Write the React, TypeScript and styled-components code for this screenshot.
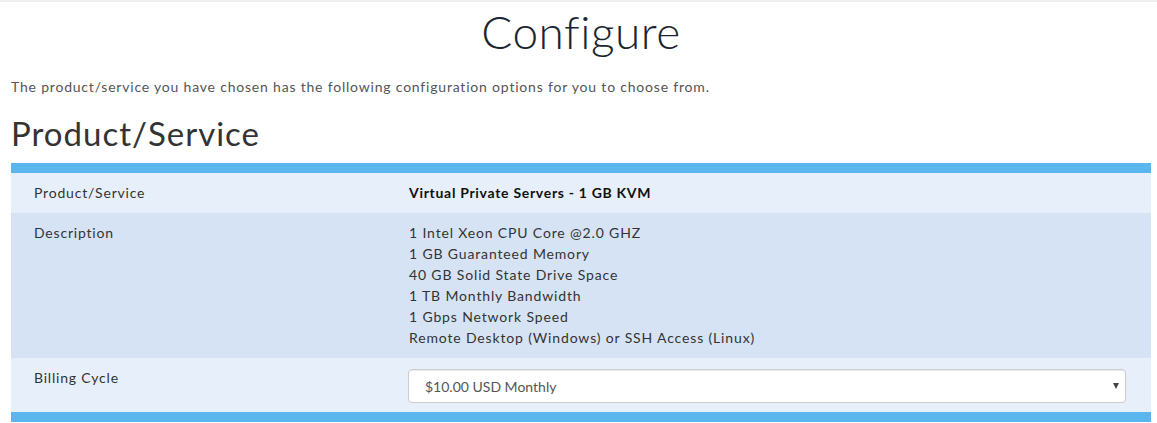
import React from "react";
import styled, { createGlobalStyle } from "styled-components";

const Global = createGlobalStyle`
  html, body { margin: 0; padding: 0; background: #fff; }
  body { font-family: "Lato", "Open Sans", sans-serif; color: #333; }
  * { box-sizing: border-box; }
`;

const TopLine = styled.div`
  height: 2px;
  background: #eeeeee;
`;

const Page = styled.main`
  padding: 0 6px 0 11px;
`;

const Title = styled.h1`
  margin: 0;
  height: 62px;
  line-height: 60px;
  text-align: center;
  font-size: 46px;
  font-weight: 300;
  color: #1a2530;
  letter-spacing: 0.5px;
`;

const Intro = styled.p`
  margin: 13px 0 0;
  line-height: 20px;
  font-size: 14px;
  color: #555;
  letter-spacing: 0.8px;
`;

const Section = styled.h2`
  margin: 16px 0 0;
  line-height: 40px;
  font-size: 33px;
  font-weight: 400;
  color: #333;
  letter-spacing: 1px;
`;

const Table = styled.div`
  margin-top: 10px;
  width: 1140px;
  border-top: 10px solid #5ab6ec;
  border-bottom: 10px solid #5ab6ec;
`;

const Row = styled.div<{ $dark?: boolean }>`
  display: grid;
  grid-template-columns: 397px 1fr;
  background: ${(p) => (p.$dark ? "#d6e3f4" : "#e7f0fa")};
  font-size: 14px;
  line-height: 21px;
  color: #333;
`;

const Label = styled.div`
  padding: 9px 23px 10px;
  letter-spacing: 0.8px;
`;

const Value = styled.div<{ $bold?: boolean }>`
  padding: 9px 25px 10px 1px;
  font-weight: ${(p) => (p.$bold ? 700 : 400)};
  color: ${(p) => (p.$bold ? "#111" : "#333")};
  letter-spacing: ${(p) => (p.$bold ? "0.7px" : "0.85px")};
`;

const SelectCell = styled.div`
  padding: 11px 25px 9px 0;
`;

const SelectWrap = styled.div`
  position: relative;
`;

const Select = styled.select`
  appearance: none;
  -webkit-appearance: none;
  width: 100%;
  height: 34px;
  padding: 0 30px 0 16px;
  border: 1px solid #ccc;
  border-radius: 4px;
  background: #fff;
  font-family: inherit;
  font-size: 14px;
  color: #555;
  box-shadow: inset 0 1px 1px rgba(0, 0, 0, 0.075);
`;

const Arrow = styled.span`
  position: absolute;
  right: 7px;
  top: 14px;
  width: 0;
  height: 0;
  border-left: 3.5px solid transparent;
  border-right: 3.5px solid transparent;
  border-top: 6px solid #444;
  pointer-events: none;
`;

const features = [
  "1 Intel Xeon CPU Core @2.0 GHZ",
  "1 GB Guaranteed Memory",
  "40 GB Solid State Drive Space",
  "1 TB Monthly Bandwidth",
  "1 Gbps Network Speed",
  "Remote Desktop (Windows) or SSH Access (Linux)",
];

export default function App() {
  return (
    <>
      <Global />
      <TopLine />
      <Page>
        <Title>Configure</Title>
        <Intro>
          The product/service you have chosen has the following configuration
          options for you to choose from.
        </Intro>
        <Section>Product/Service</Section>
        <Table>
          <Row>
            <Label>Product/Service</Label>
            <Value $bold>Virtual Private Servers - 1 GB KVM</Value>
          </Row>
          <Row $dark>
            <Label>Description</Label>
            <Value>
              {features.map((f) => (
                <div key={f}>{f}</div>
              ))}
            </Value>
          </Row>
          <Row>
            <Label>Billing Cycle</Label>
            <SelectCell>
              <SelectWrap>
                <Select defaultValue="m">
                  <option value="m">$10.00 USD Monthly</option>
                </Select>
                <Arrow />
              </SelectWrap>
            </SelectCell>
          </Row>
        </Table>
      </Page>
    </>
  );
}
